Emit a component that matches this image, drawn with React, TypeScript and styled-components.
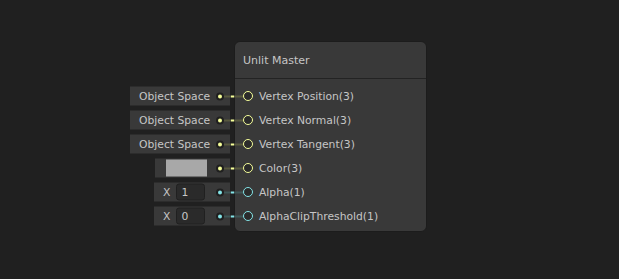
import React from "react";
import styled, { createGlobalStyle } from "styled-components";

const GlobalStyle = createGlobalStyle`
  html, body { margin: 0; padding: 0; background: #202020; }
  body { font-family: "DejaVu Sans", "Liberation Sans", sans-serif; }
`;

const Canvas = styled.div`
  width: 619px;
  height: 279px;
  background: #202020;
  padding: 41px 0 0 234px;
  box-sizing: border-box;
  overflow: hidden;
`;

const Node = styled.div`
  width: 193px;
  background: #393939;
  border: 1px solid #1c1c1c;
  border-radius: 6px;
  box-sizing: border-box;
  color: #c6c6c6;
`;

const Header = styled.div`
  height: 36px;
  display: flex;
  align-items: center;
  padding-left: 8px;
  font-size: 11px;
  border-bottom: 1px solid #232323;
`;

const Body = styled.div`
  padding: 5px 0 3px 0;
  display: flex;
  flex-direction: column;
`;

const Row = styled.div`
  position: relative;
  height: 24px;
  display: flex;
  align-items: center;
  padding-left: 8px;
  font-size: 10.75px;
`;

const Port = styled.div<{ $c: string }>`
  width: 10px;
  height: 10px;
  border-radius: 50%;
  border: 1.5px solid ${(p) => p.$c};
  background: #2b2b2b;
  box-sizing: border-box;
  margin-right: 6px;
  flex: none;
`;

const Label = styled.span`
  white-space: nowrap;
`;

const Attached = styled.div`
  position: absolute;
  right: calc(100% - 8px);
  top: 50%;
  transform: translateY(-50%);
  display: flex;
  align-items: center;
`;

const Field = styled.div<{ $w: number }>`
  width: ${(p) => p.$w}px;
  height: 19px;
  background: #393939;
  display: flex;
  align-items: center;
  box-sizing: border-box;
  color: #c6c6c6;
  font-size: 10.75px;
  white-space: nowrap;
`;

const FieldContent = styled.div`
  flex: 1;
  display: flex;
  align-items: center;
  padding-left: 9px;
`;

const Dot = styled.div<{ $c: string }>`
  width: 8px;
  height: 8px;
  border-radius: 50%;
  background: #1f1f1f;
  display: flex;
  align-items: center;
  justify-content: center;
  flex: none;
  &::after {
    content: "";
    width: 4px;
    height: 4px;
    border-radius: 50%;
    background: ${(p) => p.$c};
  }
`;

const Stub = styled.div<{ $line: string }>`
  width: 6px;
  height: 2px;
  background: ${(p) => p.$line};
  flex: none;
`;

const Wire = styled.div<{ $c: string; $line: string }>`
  width: 13px;
  height: 2px;
  background: linear-gradient(
    to right,
    ${(p) => p.$line} 0,
    ${(p) => p.$line} 1px,
    ${(p) => p.$c} 1px,
    ${(p) => p.$c} 4px,
    ${(p) => p.$line} 4px
  );
`;

const Swatch = styled.div`
  width: 41px;
  height: 17px;
  background: #a8a8a8;
  margin-left: 2px;
`;

const AxisLabel = styled.span`
  margin-right: 6px;
`;

const NumberBox = styled.div`
  width: 29px;
  height: 17px;
  background: #2a2a2a;
  border: 1px solid #202020;
  border-radius: 3px;
  box-sizing: border-box;
  display: flex;
  align-items: center;
  padding-left: 4px;
  color: #c6c6c6;
`;

const YELLOW = "#f6ff9a";
const CYAN = "#84e4e7";
const YLINE = "#58593f";
const CLINE = "#3f5656";

type Slot = {
  label: string;
  color: string;
  line: string;
  width: number;
  content: React.ReactNode;
};

const slots: Slot[] = [
  { label: "Vertex Position(3)", color: YELLOW, line: YLINE, width: 100, content: "Object Space" },
  { label: "Vertex Normal(3)", color: YELLOW, line: YLINE, width: 100, content: "Object Space" },
  { label: "Vertex Tangent(3)", color: YELLOW, line: YLINE, width: 100, content: "Object Space" },
  { label: "Color(3)", color: YELLOW, line: YLINE, width: 75, content: <Swatch /> },
  {
    label: "Alpha(1)",
    color: CYAN,
    line: CLINE,
    width: 76,
    content: (
      <>
        <AxisLabel>X</AxisLabel>
        <NumberBox>1</NumberBox>
      </>
    ),
  },
  {
    label: "AlphaClipThreshold(1)",
    color: CYAN,
    line: CLINE,
    width: 76,
    content: (
      <>
        <AxisLabel>X</AxisLabel>
        <NumberBox>0</NumberBox>
      </>
    ),
  },
];

export default function App() {
  return (
    <>
      <GlobalStyle />
      <Canvas>
        <Node>
          <Header>Unlit Master</Header>
          <Body>
            {slots.map((s) => (
              <Row key={s.label}>
                <Attached>
                  <Field $w={s.width}>
                    <FieldContent>{s.content}</FieldContent>
                    <Dot $c={s.color} />
                    <Stub $line={s.line} />
                  </Field>
                  <Wire $c={s.color} $line={s.line} />
                </Attached>
                <Port $c={s.color} />
                <Label>{s.label}</Label>
              </Row>
            ))}
          </Body>
        </Node>
      </Canvas>
    </>
  );
}
